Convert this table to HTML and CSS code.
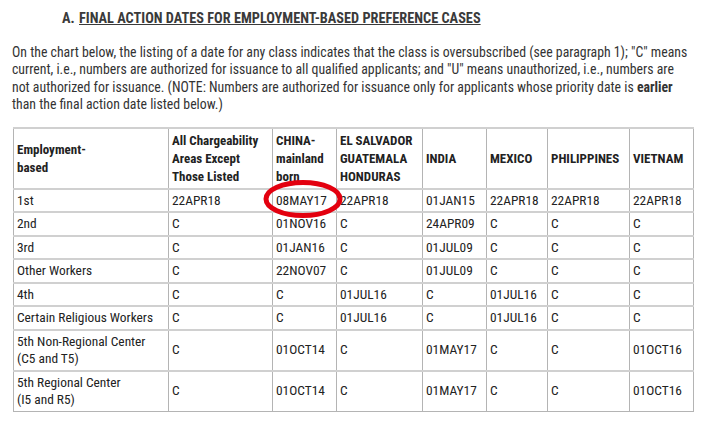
FILE: index.html
```html
<!DOCTYPE html>
<html>
<head>
<meta charset="utf-8">
<link rel="stylesheet" href="styles.css">
</head>
<body>
<div class="page">
  <h2 class="title"><span class="letter">A.</span><span class="u">FINAL ACTION DATES FOR EMPLOYMENT-BASED PREFERENCE CASES</span></h2>
  <p class="intro">On the chart below, the listing of a date for any class indicates that the class is oversubscribed (see paragraph 1); "C" means current, i.e., numbers are authorized for issuance to all qualified applicants; and "U" means unauthorized, i.e., numbers are not authorized for issuance. (NOTE: Numbers are authorized for issuance only for applicants whose priority date is <b>earlier</b> than the final action date listed below.)</p>
  <div class="tablewrap">
    <table class="chart">
      <colgroup>
        <col class="c1"><col class="c2"><col class="c3"><col class="c4"><col class="c5"><col class="c6"><col class="c7"><col class="c8">
      </colgroup>
      <thead>
        <tr>
          <th>Employment-<br>based</th>
          <th>All Chargeability Areas Except Those Listed</th>
          <th>CHINA-<br>mainland born</th>
          <th>EL SALVADOR GUATEMALA HONDURAS</th>
          <th>INDIA</th>
          <th>MEXICO</th>
          <th>PHILIPPINES</th>
          <th>VIETNAM</th>
        </tr>
      </thead>
      <tbody>
        <tr><td>1st</td><td>22APR18</td><td>08MAY17</td><td>22APR18</td><td>01JAN15</td><td>22APR18</td><td>22APR18</td><td>22APR18</td></tr>
        <tr><td>2nd</td><td>C</td><td>01NOV16</td><td>C</td><td>24APR09</td><td>C</td><td>C</td><td>C</td></tr>
        <tr><td>3rd</td><td>C</td><td>01JAN16</td><td>C</td><td>01JUL09</td><td>C</td><td>C</td><td>C</td></tr>
        <tr><td>Other Workers</td><td>C</td><td>22NOV07</td><td>C</td><td>01JUL09</td><td>C</td><td>C</td><td>C</td></tr>
        <tr><td>4th</td><td>C</td><td>C</td><td>01JUL16</td><td>C</td><td>01JUL16</td><td>C</td><td>C</td></tr>
        <tr><td>Certain Religious Workers</td><td>C</td><td>C</td><td>01JUL16</td><td>C</td><td>01JUL16</td><td>C</td><td>C</td></tr>
        <tr><td>5th Non-Regional Center<br>(C5 and T5)</td><td>C</td><td>01OCT14</td><td>C</td><td>01MAY17</td><td>C</td><td>C</td><td>01OCT16</td></tr>
        <tr><td>5th Regional Center<br>(I5 and R5)</td><td>C</td><td>01OCT14</td><td>C</td><td>01MAY17</td><td>C</td><td>C</td><td>01OCT16</td></tr>
      </tbody>
    </table>
    <svg class="circle" width="84" height="42" viewBox="0 0 84 42"><ellipse cx="42" cy="21" rx="37" ry="16.5" fill="none" stroke="#e3000f" stroke-width="5"/></svg>
  </div>
</div>
</body>
</html>
```

FILE: styles.css
```css
html, body {
  margin: 0;
  padding: 0;
  background: #ffffff;
}
.page {
  font-family: "Roboto Condensed", Roboto, "Liberation Sans", sans-serif;
  font-stretch: 87.5%;
  color: #333333;
  padding: 10px 11px 0 12px;
}
.title {
  margin: 0 0 0 50px;
  font-size: 14.3px;
  font-weight: 700;
  line-height: 17px;
  color: #3a3a3a;
}
.letter {
  display: inline-block;
  width: 17px;
}
.u {
  text-decoration: underline;
}
.intro {
  margin: 17px 0 0 0;
  font-size: 13.8px;
  line-height: 17.4px;
  color: #333333;
}
.intro b {
  font-weight: 700;
}
.tablewrap {
  position: relative;
  margin: 13px 0 0 1px;
}
.chart {
  table-layout: fixed;
  width: 680px;
  border-collapse: collapse;
  border: 1px solid #6e6e6e;
  font-size: 13.4px;
  line-height: 17.5px;
  color: #222222;
}
.c1 { width: 155px; }
.c2 { width: 104px; }
.c3 { width: 64px; }
.c4 { width: 86px; }
.c5 { width: 64px; }
.c6 { width: 61px; }
.c7 { width: 82px; }
.c8 { width: 64px; }
.chart th, .chart td {
  border: 1px solid #b4b4b4;
  border-top: 2px solid #d0d0d0;
  text-align: left;
  vertical-align: middle;
  padding: 2px 3px 2px 3px;
}
.chart th {
  font-size: 13px;
  font-weight: 700;
  line-height: 18px;
  padding-top: 3px;
  padding-bottom: 2px;
}
.circle {
  position: absolute;
  left: 248px;
  top: 51px;
}
```
